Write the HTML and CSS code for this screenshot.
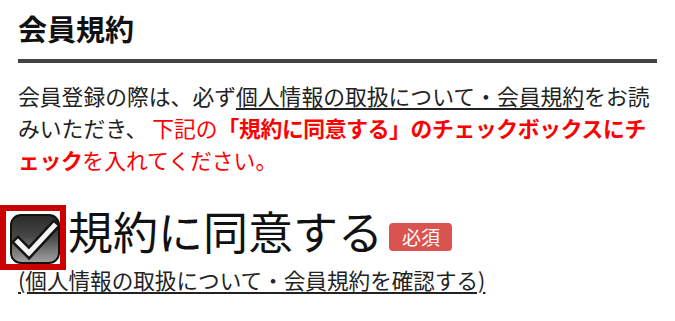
FILE: index.html
```html
<!DOCTYPE html>
<html lang="ja">
<head>
<meta charset="utf-8">
<link rel="stylesheet" href="styles.css">
</head>
<body>
<div class="page">
  <h2 class="title">会員規約</h2>
  <p class="intro">会員登録の際は、必ず<a class="link" href="#">個人情報の取扱について・会員規約</a>をお読みいただき、 <span class="red">下記の<strong>「規約に同意する」のチェックボックスにチェック</strong>を入れてください。</span></p>
  <div class="agree">
    <span class="check-frame">
      <svg class="check" width="50" height="50" viewBox="0 0 50 50">
        <defs>
          <linearGradient id="g" x1="0" y1="0" x2="0" y2="1">
            <stop offset="0" stop-color="#2a2a2a"/>
            <stop offset="0.45" stop-color="#474747"/>
            <stop offset="1" stop-color="#a3a3a3"/>
          </linearGradient>
        </defs>
        <rect x="1" y="1" width="48" height="48" rx="10" fill="url(#g)" stroke="#111" stroke-width="2"/>
        <path d="M8 28 L19 39 L44 12" fill="none" stroke="#151515" stroke-width="10" stroke-linejoin="miter" stroke-linecap="square"/>
        <path d="M8 28 L19 39 L44 12" fill="none" stroke="#f4f4f4" stroke-width="5" stroke-linejoin="miter" stroke-linecap="square"/>
      </svg>
    </span>
    <span class="agree-text">規約に同意する</span>
    <span class="badge">必須</span>
  </div>
  <a class="link terms" href="#">(個人情報の取扱について・会員規約を確認する)</a>
</div>
</body>
</html>
```

FILE: styles.css
```css
html, body {
  margin: 0;
  padding: 0;
  background: #fff;
}
body {
  font-family: "Noto Sans CJK JP", "Noto Sans", sans-serif;
  color: #222;
}
.page {
  padding: 0 18px;
}
.title {
  margin: 0;
  padding-top: 8px;
  font-size: 29px;
  line-height: 40px;
  font-weight: 700;
  color: #111;
  padding-bottom: 11px;
  border-bottom: 4px solid #444;
}
.intro {
  margin: 17px 0 0;
  font-size: 21.8px;
  line-height: 32px;
}
.link {
  color: #222;
  text-decoration: underline;
  text-underline-offset: 3px;
}
.red {
  color: #ff0000;
}
.red strong {
  font-weight: 700;
  letter-spacing: -0.35px;
}
.agree {
  display: flex;
  align-items: center;
  margin: 29px 0 0 -18px;
}
.check-frame {
  display: flex;
  padding: 3px 0 0 4px;
  border: 6px solid #cc0000;
}
.check {
  display: block;
}
.agree-text {
  font-size: 45px;
  line-height: 56px;
  color: #111;
  margin-left: 2px;
  margin-top: -14px;
}
.badge {
  margin-left: 6px;
  margin-top: -1px;
  background: #d9534f;
  color: #fff;
  font-size: 19px;
  line-height: 28px;
  padding: 0 12px 0 13px;
  border-radius: 4px;
}
.terms {
  display: inline-block;
  font-size: 21.6px;
  line-height: 26px;
  margin-top: -10px;
}
```
